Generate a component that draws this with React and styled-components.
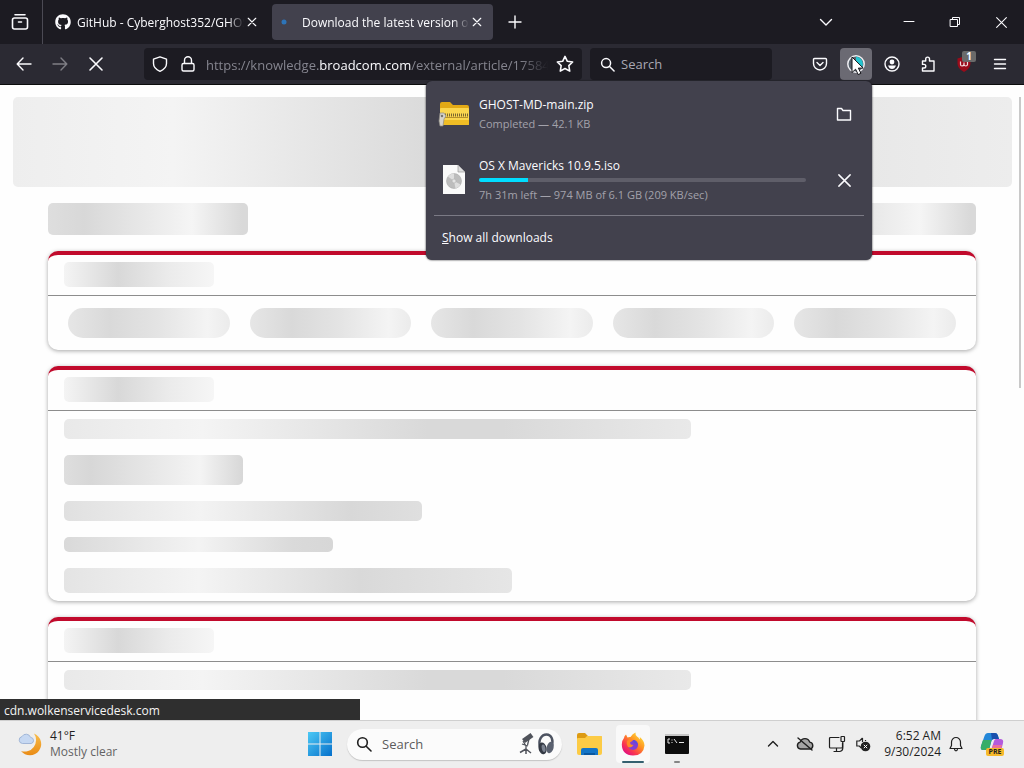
import styled, { createGlobalStyle } from "styled-components";
import { FaGithub } from "react-icons/fa";

const color = {
  frame: "#1c1b22",
  toolbar: "#2b2a33",
  panel: "#42414d",
  text: "#fbfbfe",
  dim: "#a3a2ab",
  red: "#c10a2c",
  taskbar: "#eeeeee",
};

const GlobalStyle = createGlobalStyle`
  * {
    box-sizing: border-box;
  }
  body {
    margin: 0;
    font-family: "Open Sans", "Noto Sans", sans-serif;
    font-size: 12px;
    line-height: 16px;
  }
  button,
  input {
    font: inherit;
    color: inherit;
    border: 0;
    padding: 0;
    background: none;
    outline: none;
  }
  svg {
    display: block;
    flex: none;
  }
`;

const Screen = styled.div`
  position: relative;
  display: flex;
  flex-direction: column;
  height: 100vh;
  overflow: hidden;
  background: ${color.frame};
`;

/* tab strip */
const TabStrip = styled.header`
  display: flex;
  align-items: center;
  height: 44px;
  flex: none;
  color: ${color.text};
  background: ${color.frame};
`;

const FirefoxView = styled.button`
  display: grid;
  place-items: center;
  width: 43px;
  height: 44px;
  padding-right: 3px;
  border-right: 1px solid #4b4a54;
`;

const Tab = styled.div`
  display: flex;
  align-items: center;
  width: 221px;
  height: 36px;
  margin-left: 4px;
  padding: 0 8px;
  border-radius: 4px;
  background: ${(props) => (props.$active ? color.panel : "transparent")};
`;

const TabTitle = styled.span`
  flex: 1;
  min-width: 0;
  padding-top: 2px;
  margin-left: ${(props) => (props.$wide ? "14px" : "6px")};
  overflow: hidden;
  white-space: nowrap;
  mask-image: linear-gradient(to left, transparent, #000 16px);
`;

const TabClose = styled.button`
  display: grid;
  place-items: center;
  width: 16px;
  height: 24px;
`;

const StripButton = styled.button`
  display: grid;
  place-items: center;
  width: 36px;
  height: 36px;
  margin-left: ${(props) => (props.$push ? "auto" : "4px")};
`;

const WindowButtons = styled.div`
  display: flex;
  margin-left: 42px;
`;

const WindowButton = styled.button`
  display: grid;
  place-items: center;
  width: 46px;
  height: 44px;
`;

/* navigation bar */
const NavBar = styled.nav`
  display: flex;
  align-items: center;
  gap: 4px;
  height: 41px;
  flex: none;
  padding: 0 8px;
  color: ${color.text};
  background: ${color.toolbar};
  border-bottom: 1px solid #0c0c0d;
`;

const ToolButton = styled.button`
  position: relative;
  display: grid;
  place-items: center;
  width: 32px;
  height: 32px;
  flex: none;
  border-radius: 4px;
  opacity: ${(props) => (props.$faded ? 0.4 : 1)};
  background: ${(props) => (props.$open ? "#6b6a73" : "transparent")};
`;

const Badge = styled.span`
  position: absolute;
  top: 3px;
  right: 4px;
  width: 14px;
  height: 11px;
  border-radius: 2px;
  background: #6a6a6a;
  font-size: 10px;
  font-weight: 700;
  line-height: 11px;
  text-align: center;
`;

const UrlBar = styled.div`
  display: flex;
  align-items: center;
  flex: 422 1 0;
  min-width: 0;
  height: 32px;
  margin-left: 28px;
  padding: 0 8px;
  border-radius: 4px;
  background: ${color.frame};
`;

const UrlIcons = styled.div`
  display: flex;
  gap: 12px;
`;

const Url = styled.div`
  flex: 1;
  min-width: 0;
  margin: 0 8px 0 10px;
  padding-top: 2px;
  overflow: hidden;
  white-space: nowrap;
  font-size: 13px;
  line-height: 20px;
  color: #85858f;
  mask-image: linear-gradient(to left, transparent, #000 28px);
`;

const Host = styled.span`
  color: ${color.text};
`;

const SearchBar = styled.label`
  display: flex;
  align-items: center;
  gap: 6px;
  flex: 162 1 0;
  min-width: 0;
  height: 32px;
  margin: 0 28px 0 4px;
  padding: 0 10px;
  border-radius: 4px;
  background: ${color.frame};
`;

const SearchInput = styled.input`
  flex: 1;
  min-width: 0;
  width: 100%;
  font-size: 13px;
  color: ${(props) => (props.$light ? "#5c5c5c" : "#a9a8b2")};
  &::placeholder {
    color: inherit;
    opacity: 1;
  }
`;

/* downloads panel */
const Panel = styled.section`
  position: absolute;
  top: 81px;
  right: 152px;
  z-index: 2;
  width: 446px;
  border-radius: 6px;
  color: ${color.text};
  background: ${color.panel};
  box-shadow: 0 0 2px #15141a;
`;

const Download = styled.div`
  display: flex;
  align-items: center;
  height: 66px;
  padding: 0 12px;
`;

const FileIcon = styled.div`
  display: grid;
  place-items: center;
  width: 32px;
  margin-right: 9px;
`;

const Details = styled.div`
  flex: 1;
  min-width: 0;
`;

const FileName = styled.div`
  line-height: 18px;
`;

const Status = styled.div`
  padding-top: 1px;
  font-size: 11px;
  line-height: 18px;
  color: ${color.dim};
`;

const Track = styled.div`
  height: 4px;
  margin: 3px 0;
  border-radius: 2px;
  background: #5f5e69;
  overflow: hidden;
`;

const Fill = styled.div`
  height: 100%;
  background: #00ddff;
`;

const RowButton = styled.button`
  display: grid;
  place-items: center;
  width: 32px;
  height: 32px;
  margin-left: 22px;
`;

const ShowAll = styled.button`
  display: block;
  width: calc(100% - 16px);
  height: 45px;
  margin: 2px 8px 0;
  padding-left: 8px;
  border-top: 1px solid #7b7a85;
  text-align: left;
`;

/* page */
const Page = styled.main`
  position: relative;
  flex: 1;
  min-height: 0;
  padding: 12px 12px 0 13px;
  overflow: hidden;
  background: #fefefe;
`;

const Bone = styled.div`
  width: ${(props) => props.$width || "100%"};
  height: ${(props) => props.$height}px;
  border-radius: ${(props) => props.$radius || 5}px;
  background: linear-gradient(to right, ${(props) => props.$shade});
`;

const Content = styled.div`
  display: flex;
  flex-direction: column;
  gap: 16px;
  margin: 16px 36px 0 35px;
`;

const TitleRow = styled.div`
  display: flex;
  justify-content: space-between;
`;

const Card = styled.article`
  border-top: 4px solid ${color.red};
  border-radius: 10px;
  background: #fefefe;
  box-shadow: 0 1px 4px rgba(0, 0, 0, 0.35);
`;

const CardHead = styled.div`
  height: 41px;
  padding: 7px 16px;
  border-bottom: 1px solid #8d8d8d;
`;

const Pills = styled.div`
  display: flex;
  gap: 20px;
  padding: 12px 20px;
`;

const Lines = styled.div`
  display: flex;
  flex-direction: column;
  gap: 16px;
  padding: 8px 16px;
`;

const ScrollThumb = styled.div`
  position: absolute;
  top: 12px;
  right: 3px;
  width: 2px;
  height: 291px;
  background: #c9c9c9;
`;

const LinkStatus = styled.div`
  position: absolute;
  left: 0;
  bottom: 0;
  width: 360px;
  height: 21px;
  padding-left: 4px;
  line-height: 24px;
  color: #f4f4f4;
  background: #2f2f2f;
`;

/* taskbar */
const Taskbar = styled.footer`
  display: grid;
  grid-template-columns: 303px auto 1fr;
  align-items: center;
  height: 48px;
  flex: none;
  padding-bottom: 1px;
  color: #1f1f1f;
  background: ${color.taskbar};
  border-top: 1px solid #cfcfcf;
`;

const Weather = styled.button`
  display: flex;
  align-items: center;
  gap: 8px;
  padding-left: 17px;
  text-align: left;
`;

const Muted = styled.div`
  color: #636363;
`;

const Apps = styled.div`
  display: flex;
  align-items: center;
  gap: 10px;
`;

const AppButton = styled.button`
  position: relative;
  display: grid;
  place-items: center;
  width: 34px;
  height: 38px;
  border-radius: 4px;
  background: ${(props) => (props.$active ? "#f9f9f9" : "transparent")};
`;

const Running = styled.span`
  position: absolute;
  bottom: 0;
  left: 50%;
  width: ${(props) => (props.$active ? "22px" : "6px")};
  height: 2px;
  transform: translateX(-50%);
  border-radius: 1px;
  background: ${(props) => (props.$active ? "#35606f" : "#858585")};
`;

const TaskSearch = styled.label`
  display: flex;
  align-items: center;
  gap: 10px;
  width: 215px;
  height: 31px;
  padding: 0 6px 0 9px;
  border-radius: 16px;
  background: #fbfbfb;
  box-shadow: 0 1px 1px #c4c4c4;
`;

const Tray = styled.div`
  display: flex;
  align-items: center;
  justify-content: flex-end;
  padding-right: 20px;
`;

const TrayButton = styled.button`
  display: grid;
  place-items: center;
  width: ${(props) => props.$width || 32}px;
  height: 32px;
`;

const Clock = styled.button`
  width: 69px;
  padding-right: 1px;
  text-align: right;
`;

const Stroke = ({ size = 16, width = 1.4, box = 16, children }) => (
  <svg
    width={size}
    height={size}
    viewBox={`0 0 ${box} ${box}`}
    fill="none"
    stroke="currentColor"
    strokeWidth={width}
    strokeLinecap="round"
    strokeLinejoin="round"
  >
    {children}
  </svg>
);

const Cross = ({ size = 12, width = 1.4 }) => (
  <Stroke size={size} box={12} width={width}>
    <path d="M1.5 1.5l9 9M10.5 1.5l-9 9" />
  </Stroke>
);

const Magnifier = ({ size = 16 }) => (
  <Stroke size={size} width={1.6}>
    <circle cx="6.5" cy="6.5" r="4.8" />
    <path d="M10.2 10.2L15 15" />
  </Stroke>
);

const ZipIcon = () => (
  <svg width="32" height="28" viewBox="0 0 32 28">
    <path d="M2 4q0-2 2-2h8l3 3h14q2 0 2 2v5H2z" fill="#e2a915" />
    <rect x="2" y="8" width="29" height="17" rx="1" fill="#fbd64e" />
    <path d="M2 20h29v4q0 1-1 1H3q-1 0-1-1z" fill="#f0bd25" />
    <path d="M5 15h25" stroke="#7a6530" strokeWidth="3" strokeDasharray="1 1" />
    <path d="M5 17.5h25" stroke="#b8912a" strokeWidth="1" />
    <path d="M2 13h4l2 3-2 3-1 7H2l-1-5z" fill="#d6d3ca" stroke="#8e8b84" strokeWidth="0.7" />
    <circle cx="4" cy="16" r="1.2" fill="#77746c" />
  </svg>
);

const IsoIcon = () => (
  <svg width="24" height="30" viewBox="0 0 24 30">
    <path d="M1 0h15l7 7v22H1z" fill="#fafafa" />
    <path d="M16 0l7 7h-7z" fill="#42414d" />
    <path d="M16 0v7h7" fill="#dedede" stroke="#999" strokeWidth="0.7" />
    <circle cx="12" cy="16" r="7.5" fill="#bdbdbd" stroke="#a2a2a2" strokeWidth="0.5" />
    <path d="M12 16L6 11.5a7.5 7.5 0 0 1 6-3zM12 16l6.5 3.5a7.5 7.5 0 0 1-5 4z" fill="#dedede" />
    <circle cx="12" cy="16" r="2" fill="#e4e4e4" stroke="#b0b0b0" strokeWidth="0.6" />
  </svg>
);

const DownloadsIcon = () => (
  <svg width="32" height="32" viewBox="0 0 32 32">
    <circle cx="16" cy="16" r="8.2" fill="#59636d" stroke="#eeeef2" strokeWidth="1.5" />
    <path d="M16 16V8.5a7.5 7.5 0 0 1 6 11z" fill="#22c4cf" />
    <path
      d="M12 9v15.5l3.6-3.3 2.6 5.4 2.7-1.3-2.5-5.2h4.8z"
      fill="#fff"
      stroke="#17171c"
      strokeWidth="1"
    />
  </svg>
);

const UblockIcon = () => (
  <svg width="18" height="18" viewBox="0 0 18 18">
    <path d="M9 1.5l6.5 2v5q0 5-6.5 8.500-6.500-3.500-6.500-8.500v-5z" fill="#9a0b1a" />
    <path
      d="M5.5 6.5v3q0 1.5 1.5 1.5t2-1.5v-2 2q.3 1.5 1.8 1.5t1.7-1.5v-3"
      fill="none"
      stroke="#f3dfe1"
      strokeWidth="1.2"
    />
  </svg>
);

const MoonIcon = () => (
  <svg width="25" height="25" viewBox="0 0 25 25">
    <defs>
      <linearGradient id="moon" x1="0" y1="0" x2="0" y2="1">
        <stop offset="0" stopColor="#f9bd4b" />
        <stop offset="1" stopColor="#e98b16" />
      </linearGradient>
    </defs>
    <path d="M17 1.5A11.3 11.3 0 1 1 4 19A11.5 11.5 0 0 0 17 1.5z" fill="url(#moon)" />
    <path
      d="M5.5 11.5a3.5 3.5 0 0 1-.6-6.9 4.8 4.8 0 0 1 8.7.8 3.1 3.1 0 0 1 .6 6.1z"
      fill="#c6d8f2"
      stroke="#93abd1"
      strokeWidth="0.8"
    />
  </svg>
);

const WindowsIcon = () => (
  <svg width="24" height="24" viewBox="0 0 24 24">
    <defs>
      <linearGradient id="win" x1="0" y1="0" x2="1" y2="1">
        <stop offset="0" stopColor="#4cc9f5" />
        <stop offset="1" stopColor="#0670cb" />
      </linearGradient>
    </defs>
    <path d="M0 0h11.5v11.5H0zM12.5 0H24v11.5H12.5zM0 12.5h11.5V24H0zM12.5 12.5H24V24H12.5z" fill="url(#win)" />
  </svg>
);

const GearArt = () => (
  <svg width="38" height="24" viewBox="0 0 38 24">
    <g stroke="#50535b" fill="none">
      <path d="M5.5 9L14 3" strokeWidth="5" />
      <path d="M5 9l3 5M11 7l-1.500 6M4 12l6 2M8 14v4" strokeWidth="1.3" />
      <path d="M8 17l-6 3.5M8 17l5 4M8 17v5" strokeWidth="1.5" />
    </g>
    <path d="M22 15C20 8 23.5 2.5 28.5 2.5s7.5 6 5 12.5" fill="none" stroke="#4d5361" strokeWidth="2.4" />
    <ellipse cx="24.5" cy="16.5" rx="4" ry="6" fill="#343944" transform="rotate(-12 24 16)" />
    <ellipse cx="25.5" cy="16.5" rx="1.8" ry="3.8" fill="#7b8290" transform="rotate(-12 24 16)" />
    <ellipse cx="32" cy="15.5" rx="3.5" ry="5.8" fill="#5a6170" transform="rotate(14 32 16)" />
  </svg>
);

const ExplorerIcon = () => (
  <svg width="25" height="22" viewBox="0 0 25 22">
    <path d="M0 2q0-2 2-2h6l3 3h12q2 0 2 2v6H0z" fill="#dd9b13" />
    <path d="M0 6q0-1 1-1h7l2-2h14q1 0 1 1v16q0 2-2 2H2q-2 0-2-2z" fill="#fccb45" />
    <path d="M4 22v-5q0-2 2-2h13q2 0 2 2v5z" fill="#1374c6" />
    <path d="M7 20h11v2H7z" fill="#0a579f" />
  </svg>
);

const FirefoxIcon = () => (
  <svg width="24" height="24" viewBox="0 0 24 24">
    <defs>
      <linearGradient id="fox" x1="0.9" y1="0.1" x2="0.2" y2="0.9">
        <stop offset="0" stopColor="#ffe23d" />
        <stop offset="0.4" stopColor="#ff9422" />
        <stop offset="0.75" stopColor="#fb3a4c" />
        <stop offset="1" stopColor="#e4147c" />
      </linearGradient>
    </defs>
    <path
      d="M5 2.5l1.5 3Q8 4.8 9.5 5q2-3.5 5-4.5-.3 2.5 1.5 4 2 1 2.5 3 .6-1 .3-2.5Q23.5 9 23.5 13.5 22.5 23.5 12 23.5 1 23 .8 12.5.8 8.5 3 6q0-2 2-3.5z"
      fill="url(#fox)"
    />
    <circle cx="12" cy="13" r="5" fill="#8140d6" />
    <path d="M6 9q3-3 6-.5l-3 2q0 2.5 3.5 2.5Q10.5 16.5 7 15q-2-2.500-1-6z" fill="#ff8a25" />
    <path d="M12 8q4 0 5 5-2-2-4-2z" fill="#5c4ce0" />
  </svg>
);

const TerminalIcon = () => (
  <svg width="24" height="20" viewBox="0 0 24 20">
    <rect width="24" height="20" rx="1" fill="#0d0d0d" />
    <rect width="24" height="2" fill="#c7c7c7" />
    <path d="M5 5H3v4h2M7 5.5v1M7 8v1M9 5l3 4M14 8.5h5" stroke="#e6e6e6" fill="none" />
  </svg>
);

const CloudOffIcon = () => (
  <Stroke size={18} box={18} width={1.4}>
    <path d="M4.5 14a3.5 3.5 0 0 1-.3-6.9 5 5 0 0 1 9.5 0A3.5 3.5 0 0 1 14 14z" fill="#a5a5a5" />
    <path d="M2 3l14 12" />
  </Stroke>
);

const NetworkIcon = () => (
  <Stroke size={18} box={18} width={1.2}>
    <path d="M11 2.5H2.5q-1 0-1 1V12q0 1 1 1h11q1 0 1-1V8M6 16.5h5.5M8.5 13v3" />
    <rect x="13" y="1.5" width="3.5" height="5" rx="0.5" />
    <path d="M14.8 6.5V13q0 3-3 3.5" />
  </Stroke>
);

const VolumeIcon = () => (
  <svg width="16" height="16" viewBox="0 0 16 16">
    <path d="M7.5 2L4.5 5H1.8v5h2.5l2 2M7.5 2v4M10.5 4v1" fill="none" stroke="#242424" strokeWidth="1.2" />
    <circle cx="10.5" cy="10.5" r="4.8" fill="#242424" />
    <path d="M8.8 8.8l3.4 3.4M12.2 8.8l-3.4 3.4" stroke="#fff" strokeWidth="1" />
  </svg>
);

const PreTag = styled.span`
  position: absolute;
  right: 0;
  bottom: 0;
  width: 18px;
  height: 8px;
  border-radius: 2px;
  font-size: 7px;
  font-weight: 700;
  line-height: 8px;
  text-align: center;
  background: #f6b92a;
`;

const CopilotButton = styled.button`
  position: relative;
  width: 24px;
  height: 24px;
  margin-left: 10px;
`;

const CopilotIcon = () => (
  <svg width="24" height="24" viewBox="0 0 24 24">
    <path d="M8 1h7q2 0 2.7 2L19 7h-5q-2 0-2.5 2L9.5 16Q9 18 7 18H3q-3 0-2-4L4.500 4Q5.5 1 8 1z" fill="#2387d8" />
    <path d="M1 14l2-6h8.5l-2 8Q9 18 7 18H3q-3 0-2-4z" fill="#36ad68" />
    <path d="M11 1h4q2 0 2.7 2L19 7h-5q-1.5 0-2 1z" fill="#1950ad" />
    <path d="M16 7h4q4 0 3 4l-2 8q-1 4-4 4H9q-2 0-2.5-2L6 19h3q2 0 2.5-2L14 9q.5-2 2-2z" fill="#b35bdc" />
    <path d="M13 13h9l-1.5 6h-9z" fill="#ec6f9d" />
  </svg>
);

const bannerShade = "#eeeeee, #f4f4f4 16%, #dadada 42%, #dedede 62%, #e9e9e9 88%, #ededed";
const titleShade = "#dedede, #d8d8d8 18%, #f5f5f5 72%, #d9d9d9 97%";
const headShade = "#f4f4f4, #d8d8d8 36%, #ebebeb 70%, #f6f6f6";
const pillShade = "#e6e6e6, #d9d9d9 26%, #e4e4e4 56%, #f4f4f4 86%, #ebebeb";

const lines = [
  { width: "70%", height: 20, shade: "#e9e9e9, #f4f4f4 22%, #d9d9d9 58%, #d9d9d9 70%, #e9e9e9" },
  { width: "20%", height: 30, shade: "#dedede, #d7d7d7 15%, #f4f4f4 76%, #d7d7d7" },
  { width: "40%", height: 20, shade: "#e0e0e0, #f3f3f3 38%, #d8d8d8 80%, #dfdfdf" },
  { width: "30%", height: 15, shade: "#d9d9d9, #f3f3f3 50%, #dadada 85%, #d7d7d7" },
  { width: "50%", height: 25, shade: "#e4e4e4, #f4f4f4 30%, #d9d9d9 66%, #e6e6e6" },
];

const DownloadRow = ({ icon, name, status, progress, action, children }) => (
  <Download>
    <FileIcon>{icon}</FileIcon>
    <Details>
      <FileName>{name}</FileName>
      {progress ? (
        <Track>
          <Fill style={{ width: `${progress}%` }} />
        </Track>
      ) : null}
      <Status>{status}</Status>
    </Details>
    <RowButton aria-label={action}>{children}</RowButton>
  </Download>
);

const DownloadsPanel = () => (
  <Panel>
    <DownloadRow
      icon={<ZipIcon />}
      name="GHOST-MD-main.zip"
      status="Completed — 42.1 KB"
      action="Show in folder"
    >
      <Stroke>
        <path d="M1.5 2.5h4l1.5 2h7.5V14h-13z" />
      </Stroke>
    </DownloadRow>
    <DownloadRow
      icon={<IsoIcon />}
      name="OS X Mavericks 10.9.5.iso"
      status="7h 31m left — 974 MB of 6.1 GB (209 KB/sec)"
      progress={15}
      action="Cancel"
    >
      <Cross size={15} width={1.2} />
    </DownloadRow>
    <ShowAll>
      <u>S</u>how all downloads
    </ShowAll>
  </Panel>
);

const LineCard = () => (
  <Card>
    <CardHead>
      <Bone $width="150px" $height={25} $shade={headShade} />
    </CardHead>
    <Lines>
      {lines.map((line) => (
        <Bone key={line.width} $width={line.width} $height={line.height} $shade={line.shade} />
      ))}
    </Lines>
  </Card>
);

const App = () => (
  <>
    <GlobalStyle />
    <Screen>
      <TabStrip>
        <FirefoxView aria-label="Firefox View">
          <Stroke size={18} box={18} width={1.6}>
            <path d="M4 1.8h10M3.5 5h11q2 0 2 2v7q0 2-2 2h-11q-2 0-2-2V7q0-2 2-2zM7.5 9h3" />
          </Stroke>
        </FirefoxView>
        <Tab>
          <FaGithub size={16} />
          <TabTitle>GitHub - Cyberghost352/GHOS</TabTitle>
          <TabClose aria-label="Close tab">
            <Cross size={10} />
          </TabClose>
        </Tab>
        <Tab $active>
          <svg width="8" height="8" viewBox="0 0 8 8">
            <circle cx="4" cy="4" r="2.5" fill="#2d74b8" />
          </svg>
          <TabTitle $wide>Download the latest version of V</TabTitle>
          <TabClose aria-label="Close tab">
            <Cross size={10} />
          </TabClose>
        </Tab>
        <StripButton aria-label="New tab">
          <Stroke size={14} box={14}>
            <path d="M7 1v12M1 7h12" />
          </Stroke>
        </StripButton>
        <StripButton $push aria-label="List all tabs">
          <Stroke size={14} box={14}>
            <path d="M1.5 4.5L7 10l5.5-5.5" />
          </Stroke>
        </StripButton>
        <WindowButtons>
          <WindowButton aria-label="Minimize">
            <Stroke size={12} box={12} width={1}>
              <path d="M1 5.5h10" />
            </Stroke>
          </WindowButton>
          <WindowButton aria-label="Restore">
            <Stroke size={12} box={12} width={1}>
              <path d="M1.5 3.5h7v7h-7zM3.5 3.5v-2h7v7h-2" />
            </Stroke>
          </WindowButton>
          <WindowButton aria-label="Close">
            <Cross size={13} width={1} />
          </WindowButton>
        </WindowButtons>
      </TabStrip>

      <NavBar>
        <ToolButton aria-label="Back">
          <Stroke>
            <path d="M15 8H1.5M7 2L1.2 8 7 14" />
          </Stroke>
        </ToolButton>
        <ToolButton aria-label="Forward" $faded>
          <Stroke>
            <path d="M1 8h13.5M9 2l5.8 6L9 14" />
          </Stroke>
        </ToolButton>
        <ToolButton aria-label="Stop">
          <Cross size={16} width={1.2} />
        </ToolButton>
        <UrlBar>
          <UrlIcons>
            <Stroke>
              <path d="M8 .8l6.5 2.4v4.3Q14.5 12.5 8 15.3 1.5 12.5 1.5 7.5V3.2z" />
            </Stroke>
            <Stroke>
              <path d="M3.5 7.5h9q1.5 0 1.5 1.5v4.5q0 1.5-1.5 1.5h-9Q2 15 2 13.5V9q0-1.5 1.5-1.5zM4.5 7.5V4.3a3.5 3.5 0 0 1 7 0v3.2" />
            </Stroke>
          </UrlIcons>
          <Url>
            https://knowledge.<Host>broadcom.com</Host>/external/article/17584
          </Url>
          <Stroke size={18}>
            <path d="M8 1.2l2.1 4.4 4.7.6-3.4 3.3.8 4.8L8 12l-4.2 2.3.8-4.8L1.2 6.2l4.7-.6z" />
          </Stroke>
        </UrlBar>
        <SearchBar>
          <Magnifier size={15} />
          <SearchInput aria-label="Search the web" placeholder="Search" />
        </SearchBar>
        <ToolButton aria-label="Save to Pocket">
          <Stroke>
            <path d="M2.5 2.5h11q1 0 1 1V7.5a6.5 6.5 0 0 1-13 0v-4q0-1 1-1zM5 6.5l3 3 3-3" />
          </Stroke>
        </ToolButton>
        <ToolButton aria-label="Downloads" $open>
          <DownloadsIcon />
        </ToolButton>
        <ToolButton aria-label="Account">
          <Stroke>
            <circle cx="8" cy="8" r="7" />
            <circle cx="8" cy="6" r="2.4" fill="currentColor" stroke="none" />
            <path d="M4 9.5h8q-1.3 3.5-4 3.5t-4-3.5z" fill="currentColor" stroke="none" />
          </Stroke>
        </ToolButton>
        <ToolButton aria-label="Extensions">
          <Stroke>
            <path d="M2.5 5h3.2V3a1.9 1.9 0 0 1 3.8 0v2h4.5v10H2.5v-3H4a1.8 1.8 0 0 0 0-3.6H2.5z" />
          </Stroke>
        </ToolButton>
        <ToolButton aria-label="uBlock Origin">
          <UblockIcon />
          <Badge>1</Badge>
        </ToolButton>
        <ToolButton aria-label="Menu">
          <Stroke size={14} box={14}>
            <path d="M1.5 2.5h11M1.5 7h11M1.5 11.5h11" />
          </Stroke>
        </ToolButton>
      </NavBar>

      <Page>
        <Bone $height={90} $shade={bannerShade} />
        <Content>
          <TitleRow>
            <Bone $width="200px" $height={32} $shade={titleShade} />
            <Bone $width="200px" $height={32} $shade={titleShade} />
          </TitleRow>
          <Card>
            <CardHead>
              <Bone $width="150px" $height={25} $shade={headShade} />
            </CardHead>
            <Pills>
              {[1, 2, 3, 4, 5].map((n) => (
                <Bone key={n} $height={30} $radius={15} $shade={pillShade} />
              ))}
            </Pills>
          </Card>
          <LineCard />
          <LineCard />
        </Content>
        <ScrollThumb />
        <LinkStatus>cdn.wolkenservicedesk.com</LinkStatus>
      </Page>

      <Taskbar>
        <Weather>
          <MoonIcon />
          <div>
            <div>41°F</div>
            <Muted>Mostly clear</Muted>
          </div>
        </Weather>
        <Apps>
          <AppButton aria-label="Start">
            <WindowsIcon />
          </AppButton>
          <TaskSearch>
            <Magnifier size={16} />
            <SearchInput $light aria-label="Search this computer" placeholder="Search" />
            <GearArt />
          </TaskSearch>
          <AppButton aria-label="File Explorer">
            <ExplorerIcon />
          </AppButton>
          <AppButton aria-label="Firefox" $active>
            <FirefoxIcon />
            <Running $active />
          </AppButton>
          <AppButton aria-label="Command Prompt">
            <TerminalIcon />
            <Running />
          </AppButton>
        </Apps>
        <Tray>
          <TrayButton aria-label="Show hidden icons">
            <Stroke size={12} box={12}>
              <path d="M1.5 8L6 3.5 10.5 8" />
            </Stroke>
          </TrayButton>
          <TrayButton aria-label="OneDrive">
            <CloudOffIcon />
          </TrayButton>
          <TrayButton aria-label="Network">
            <NetworkIcon />
          </TrayButton>
          <TrayButton $width={20} aria-label="Volume">
            <VolumeIcon />
          </TrayButton>
          <Clock>
            <div>6:52 AM</div>
            <div>9/30/2024</div>
          </Clock>
          <TrayButton $width={28} aria-label="Notifications">
            <Stroke width={1.2}>
              <path d="M8 1.5a4.5 4.5 0 0 1 4.5 4.5v3.5l1.5 3H2l1.5-3V6A4.500 4.500 0 0 1 8 1.5zM6.5 13q.2 1.8 1.5 1.8t1.5-1.8" />
            </Stroke>
          </TrayButton>
          <CopilotButton aria-label="Copilot">
            <CopilotIcon />
            <PreTag>PRE</PreTag>
          </CopilotButton>
        </Tray>
      </Taskbar>

      <DownloadsPanel />
    </Screen>
  </>
);

export default App;
